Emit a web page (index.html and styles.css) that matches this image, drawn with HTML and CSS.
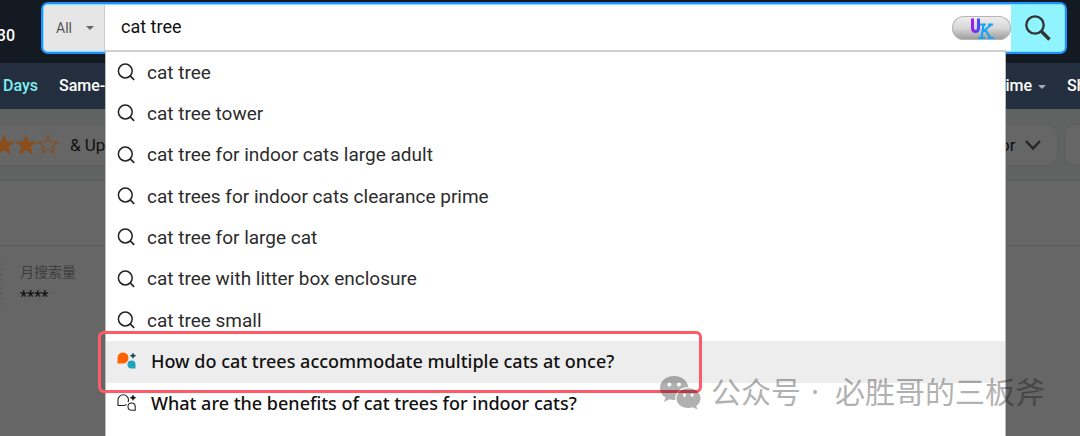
FILE: index.html
```html
<!DOCTYPE html>
<html lang="en">
<head>
    <meta charset="UTF-8">
    <meta name="viewport" content="width=device-width, initial-scale=1.0">
    <title>cat tree</title>
    <link rel="stylesheet" href="styles.css">
</head>
<body>
    <svg class="symbols" aria-hidden="true">
        <symbol id="search" viewBox="0 0 18 18">
            <circle cx="8.300" cy="8" r="6.900" fill="none" stroke="currentColor" stroke-width="1.5"/>
            <path d="M13.200 12.900L17.200 16.900" stroke="currentColor" stroke-width="1.6"/>
        </symbol>
        <symbol id="star" viewBox="0 0 22 22">
            <path d="M11 1.5L13.4 8.3H20.7L14.9 12.6L17 19.7L11 15.4L5 19.7L7.1 12.6L1.3 8.3H8.6Z" stroke="#8a4e1c" stroke-width="1.1"/>
        </symbol>
    </svg>

    <div class="page">
        <header class="header">
            <span class="location">30</span>
            <form class="search-bar">
                <div class="category">
                    <select class="category-select" aria-label="Category">
                        <option>All</option>
                    </select>
                    <span class="caret caret-dark"></span>
                </div>
                <input class="search-input" type="text" value="cat tree" aria-label="Search">
                <span class="uk-badge">
                    <svg width="59" height="24" viewBox="0 0 59 24">
                        <defs>
                            <linearGradient id="u" x1="0" x2="1"><stop offset="0" stop-color="#9a1cf0"/><stop offset="1" stop-color="#4a4cff"/></linearGradient>
                        </defs>
                        <path d="M20.500 2.500V12Q20.500 15.500 23.500 15.500Q26.500 15.500 26.500 12V2.500" fill="none" stroke="url(#u)" stroke-width="3"/>
                        <path d="M28 8.500H34M36 8.500H41M26 22H33M36 22H42M31.500 9L29.500 22M39 9L31 15.500M33.500 14L38.500 22" fill="none" stroke="#16a4f5" stroke-width="2.200"/>
                    </svg>
                </span>
                <button class="search-button" type="submit" aria-label="Go">
                    <svg width="28" height="28" viewBox="0 0 28 28">
                        <circle cx="11" cy="11" r="8.700" fill="none" stroke="#333" stroke-width="2.300"/>
                        <path d="M17.300 17.300L25.500 25.500" stroke="#333" stroke-width="3.400"/>
                    </svg>
                </button>
            </form>
        </header>

        <nav class="nav">
            <a class="nav-link deals" href="#">Days</a>
            <a class="nav-link" href="#">Same-</a>
            <a class="nav-link prime" href="#">ime <span class="caret"></span></a>
            <a class="nav-link shop" href="#">Sh</a>
        </nav>

        <div class="filters">
            <button class="filter rating" type="button">
                <svg class="star" fill="#8a4e1c"><use href="#star"/></svg>
                <svg class="star" fill="#8a4e1c"><use href="#star"/></svg>
                <svg class="star" fill="none"><use href="#star"/></svg>
                <span class="rating-text">&amp; Up</span>
            </button>
            <button class="filter color" type="button">
                or
                <svg width="18" height="12" viewBox="0 0 18 12"><path d="M2 2L9 9.500L16 2" fill="none" stroke="#262626" stroke-width="2.400"/></svg>
            </button>
            <button class="filter next" type="button" aria-label="More filters"></button>
        </div>

        <main class="results">
            <div class="volume">
                <div class="volume-label">月搜索量</div>
                <div class="volume-value">****</div>
            </div>
        </main>

        <div class="suggestions">
            <ul class="suggestion-list">
                <li class="suggestion"><svg class="icon"><use href="#search"/></svg>cat tree</li>
                <li class="suggestion"><svg class="icon"><use href="#search"/></svg>cat tree tower</li>
                <li class="suggestion"><svg class="icon"><use href="#search"/></svg>cat tree for indoor cats large adult</li>
                <li class="suggestion"><svg class="icon"><use href="#search"/></svg>cat trees for indoor cats clearance prime</li>
                <li class="suggestion"><svg class="icon"><use href="#search"/></svg>cat tree for large cat</li>
                <li class="suggestion"><svg class="icon"><use href="#search"/></svg>cat tree with litter box enclosure</li>
                <li class="suggestion"><svg class="icon"><use href="#search"/></svg>cat tree small</li>
                <li class="suggestion question active">
                    <svg class="chat-icon" viewBox="0 0 20 18">
                        <path d="M0.500 11.500V6A5.500 5.500 0 0 1 11.500 6A5.500 5.500 0 0 1 6 11.500Z" fill="#ff6200"/>
                        <path d="M18.500 16.500V12.500A4 4 0 1 0 14.500 16.500Z" fill="#20a4bc"/>
                        <path d="M16 1Q16.300 3.200 18.800 3.700Q16.300 4.200 16 6.400Q15.700 4.200 13.200 3.700Q15.700 3.200 16 1Z" fill="#0d4a5c" stroke="#0d4a5c" stroke-width=".5"/>
                    </svg>
                    How do cat trees accommodate multiple cats at once?
                </li>
                <li class="suggestion question">
                    <svg class="chat-icon" viewBox="0 0 20 18">
                        <path d="M9.500 10.500Q8.200 11.500 6 11.500H1V6A5.200 5.200 0 0 1 11.500 6Q11.500 7 11 8" fill="none" stroke="#222" stroke-width="1.100"/>
                        <path d="M18.200 16.200V12.500A3.600 3.600 0 1 0 14.600 16.200Z" fill="none" stroke="#222" stroke-width="1.100"/>
                        <path d="M16 1Q16.300 3.200 18.800 3.700Q16.300 4.200 16 6.400Q15.700 4.200 13.200 3.700Q15.700 3.200 16 1Z" fill="#111" stroke="#111" stroke-width=".5"/>
                    </svg>
                    What are the benefits of cat trees for indoor cats?
                </li>
            </ul>
            <div class="highlight-box"></div>
        </div>

        <div class="watermark">
            <svg width="42" height="35" viewBox="0 0 42 35">
                <path fill="#000" fill-rule="evenodd" d="M15 1C6.700 1 1 6.300 1 13C1 17 3 20.300 6.500 22.500L5 27L10.500 24.300Q13 25.200 16.300 25C15.500 18 21 12 29.500 12C28.200 5.500 22.500 1 15 1ZM10.500 7.500A2 2 0 1 1 10.400 7.500ZM20 7.500A2 2 0 1 1 19.900 7.500Z"/>
                <path fill="#000" fill-rule="evenodd" d="M29.500 13.200C22.500 13.200 17.500 17.700 17.500 23.300C17.500 29 22.500 33 29.500 33Q31.800 33 33.800 32.300L38.300 34.500L37.300 30.900C40 29 41.500 26.500 41.500 23.300C41.500 17.700 36.500 13.200 29.500 13.200ZM25.500 18.500A1.600 1.600 0 1 1 25.400 18.500ZM33.200 18.500A1.600 1.600 0 1 1 33.100 18.500Z"/>
            </svg>
            <span>公众号</span>
            <span class="dot">·</span>
            <span>必胜哥的三板斧</span>
        </div>
    </div>
</body>
</html>
```
FILE: styles.css
```css
* {
    box-sizing: border-box;
}
body {
    margin: 0;
    font-family: Roboto, "Noto Sans CJK SC", sans-serif;
    background-color: #666;
}
button, input, select {
    font-family: inherit;
    border: 0;
    padding: 0;
    margin: 0;
}
.symbols {
    display: none;
}
.page {
    position: relative;
    display: flex;
    flex-direction: column;
    min-height: 100vh;
    overflow: hidden;
}

/* header */
.header {
    display: flex;
    height: 63px;
    padding: 2px 13px 9px 0;
    background-color: #131a22;
}
.location {
    width: 41px;
    padding-right: 26px;
    display: flex;
    justify-content: flex-end;
    font-size: 16px;
    font-weight: 500;
    line-height: 67px;
    color: #fff;
}
.search-bar {
    flex: 1;
    display: flex;
    border: 2px solid #1e90ff;
    border-radius: 7px;
    background-color: #fff;
    box-shadow: inset 0 0 0 1px #7fe0ff;
    padding: 1px;
    overflow: hidden;
}
.category {
    display: flex;
    align-items: center;
    width: 61px;
    padding-right: 10px;
    background-color: #e6e6e6;
    border-right: 1px solid #cdcdcd;
    border-radius: 4px 0 0 4px;
}
.category-select {
    flex: 1;
    min-width: 0;
    padding-left: 12px;
    appearance: none;
    background: none;
    font-size: 14px;
    color: #555;
}
.caret {
    display: inline-block;
    border: 4px solid transparent;
    border-top-color: #a7acb2;
    border-bottom: 0;
    vertical-align: middle;
}
.caret-dark {
    border-top-color: #666;
}
.search-input {
    flex: 1;
    min-width: 0;
    padding: 0 16px 4px;
    font-size: 18px;
    color: #111;
    background: none;
    outline: none;
}
.uk-badge {
    align-self: center;
    height: 24px;
    border-radius: 12px;
    background: linear-gradient(#efefef, #d8d8d8 50%, #989898);
    box-shadow: inset 0 0 0 1px #b5b5b5;
}
.search-button {
    width: 53px;
    background-color: #8ff4fd;
    border-radius: 0 4px 4px 0;
    display: flex;
    align-items: center;
    justify-content: center;
}

/* navigation */
.nav {
    display: flex;
    align-items: center;
    height: 46px;
    padding-left: 3px;
    padding-bottom: 1px;
    background-color: #232f3e;
}
.nav-link {
    font-size: 16px;
    font-weight: 500;
    color: #fff;
    text-decoration: none;
    white-space: nowrap;
}
.deals {
    color: #7feef5;
    margin-right: 21px;
}
.prime {
    margin-left: auto;
}
.prime .caret {
    margin-left: 2px;
}
.shop {
    width: 13px;
    margin-left: 21px;
}

/* filters */
.filters {
    display: flex;
    align-items: center;
    gap: 6px;
    height: 72px;
    background-color: #5f6462;
    border-bottom: 1px solid #575a59;
}
.filter {
    display: flex;
    align-items: center;
    height: 42px;
    font-size: 17px;
    color: #111;
    background-color: #666;
    border: 1px solid #59605d;
}
.rating {
    flex: 1;
    border-left: 0;
    margin-left: -7px;
}
.star {
    width: 22px;
    height: 22px;
}
.rating-text {
    margin-left: 11px;
}
.color {
    margin-left: -7px;
    width: 58px;
    gap: 9px;
    border-left: 0;
    border-radius: 0 10px 10px 0;
}
.next {
    width: 16px;
    border-right: 0;
    border-radius: 10px 0 0 10px;
}

/* results behind the suggestions */
.results {
    flex: 1;
    margin-top: 64px;
    padding-top: 17px;
    border-top: 1px solid #5d5d5d;
}
.volume {
    padding-left: 18px;
    margin-left: 1px;
    border-left: 1px dashed #595959;
}
.volume-label {
    font-size: 14px;
    line-height: 18px;
    color: #3c3e41;
}
.volume-value {
    font-size: 16px;
    line-height: 32px;
    height: 24px;
    font-weight: 500;
    color: #111;
}

/* suggestions */
.suggestions {
    position: absolute;
    top: 50px;
    bottom: 0;
    left: 105px;
    right: 74px;
    background-color: #fff;
    border: 1px solid #bbb;
    border-top: 2px solid #d0d0d0;
    border-bottom: 0;
}
.suggestion-list {
    display: flex;
    flex-direction: column;
    height: 372px;
    margin: 0;
    padding: 0;
    list-style: none;
}
.suggestion {
    flex: 1;
    display: flex;
    align-items: center;
    gap: 12px;
    padding-left: 11px;
    padding-bottom: 1px;
    font-size: 19px;
    color: #2c2c2c;
    white-space: nowrap;
}
.icon {
    width: 18px;
    height: 18px;
    color: #222;
}
.question {
    gap: 14px;
    font-family: "Noto Sans", sans-serif;
    font-size: 18px;
    font-weight: 500;
    color: #111;
}
.active {
    background-color: #ededed;
}
.chat-icon {
    width: 20px;
    height: 18px;
}
.highlight-box {
    position: absolute;
    top: 279px;
    left: -8px;
    width: 604px;
    height: 62px;
    border: 3px solid #ff5a68;
    border-radius: 6px;
}

.watermark {
    position: absolute;
    right: 35px;
    bottom: 22px;
    display: flex;
    align-items: center;
    gap: 10px;
    font-family: "Noto Sans", "Noto Sans CJK SC", sans-serif;
    font-size: 30px;
    line-height: 44px;
    color: #000;
    white-space: nowrap;
    opacity: 0.3;
}
.dot {
    margin-right: 6px;
}
```
